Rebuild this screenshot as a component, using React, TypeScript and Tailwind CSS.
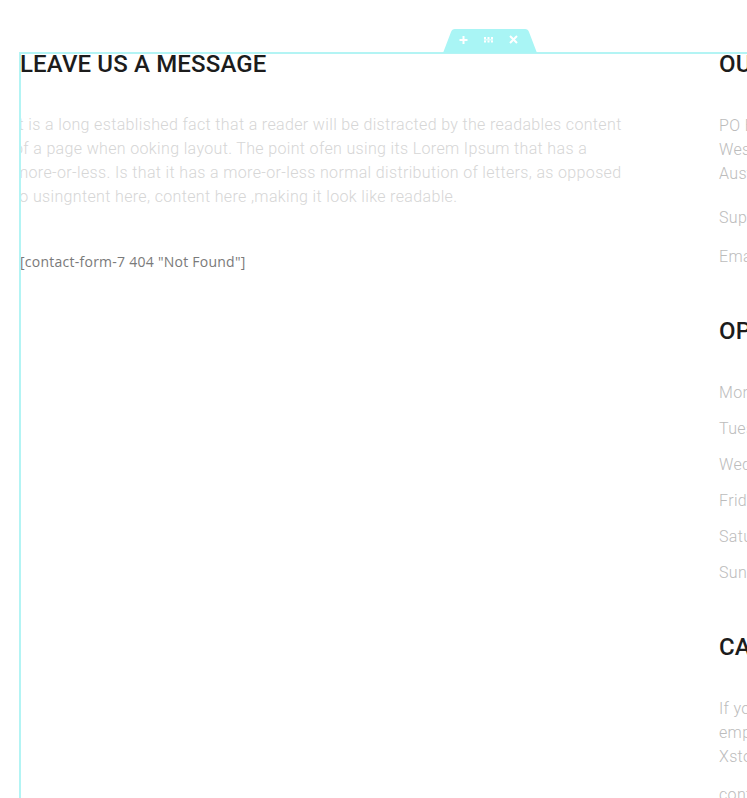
import React from "react";

const roboto = { fontFamily: "Roboto, 'Liberation Sans', sans-serif" };

function SectionHandle() {
  return (
    <div className="absolute left-[443px] top-[29px] h-[24px] w-[94px]">
      <svg width="94" height="24" viewBox="0 0 94 24" className="block">
        <path d="M0 24 L8 3 Q9 0 12 0 L82 0 Q85 0 86 3 L94 24 Z" fill="#a9f5f5" />
        {/* plus */}
        <rect x="19.5" y="7" width="2" height="8" fill="#ffffff" />
        <rect x="16.5" y="10" width="8" height="2" fill="#ffffff" />
        {/* grid handle */}
        <rect x="41" y="8" width="2" height="2" fill="#ffffff" />
        <rect x="44.5" y="8" width="2" height="2" fill="#ffffff" />
        <rect x="48" y="8" width="2" height="2" fill="#ffffff" />
        <rect x="41" y="11.5" width="2" height="2" fill="#ffffff" />
        <rect x="44.5" y="11.5" width="2" height="2" fill="#ffffff" />
        <rect x="48" y="11.5" width="2" height="2" fill="#ffffff" />
        <rect x="41" y="10" width="9" height="1.5" fill="#ffffff" opacity="0.6" />
        {/* close */}
        <path d="M67 7 L74 14 M74 7 L67 14" stroke="#ffffff" strokeWidth="2" />
      </svg>
    </div>
  );
}

function Heading({ children, className = "mb-[38px]" }: { children: React.ReactNode; className?: string }) {
  return (
    <h2
      className={`whitespace-nowrap text-[24px] font-medium uppercase leading-none tracking-[0.15px] text-[#1c1c1c] ${className}`}
      style={roboto}
    >
      {children}
    </h2>
  );
}

function Line({ children, className = "" }: { children: React.ReactNode; className?: string }) {
  return (
    <div
      className={`whitespace-nowrap text-[16px] font-light leading-[24px] tracking-[0.35px] text-[#bcbcbc] ${className}`}
      style={roboto}
    >
      {children}
    </div>
  );
}

export default function App() {
  return (
    <div className="relative h-[798px] w-[747px] overflow-hidden bg-white">
      <SectionHandle />
      <div className="pl-[19px] pt-[52px]">
        <section className="flex h-[760px] w-[1100px] border-l-2 border-t-2 border-[#b3f4f4]">
          <div className="w-[698px] shrink-0 overflow-hidden">
            <div className="-ml-px -mt-[2px]">
              <Heading className="mb-[37px]">Leave us a message</Heading>
            </div>
            <p
              className="-ml-[7px] w-[612px] text-[16px] font-light leading-[24px] tracking-[0.35px] text-[#d6d6d6]"
              style={roboto}
            >
              It is a long established fact that a reader will be distracted by the readables
              content of a page when ooking layout. The point ofen using its Lorem Ipsum that has a
              more-or-less. Is that it has a more-or-less normal distribution of letters, as opposed
              to usingntent here, content here ,making it look like readable.
            </p>
            <p
              className="-ml-px mt-[41px] text-[14px] leading-[24px] tracking-[0.25px] text-[#7a7a7a]"
              style={{ fontFamily: "'Open Sans', 'Liberation Sans', sans-serif" }}
            >
              [contact-form-7 404 "Not Found"]
            </p>
          </div>

          <aside className="w-[340px] shrink-0">
            <div className="-mt-[2px]">
              <Heading>Our address</Heading>
            </div>
            <Line>PO Box 16122 Collins Street</Line>
            <Line>West Victoria 8007</Line>
            <Line>Australia</Line>
            <Line className="mt-5">Support: (+1) 123 456 789</Line>
            <Line className="mt-[15px]">Email: support@example.com</Line>

            <div className="mt-[50px]">
              <Heading>Opening hours</Heading>
            </div>
            <div className="flex flex-col gap-3">
              <Line>Monday - Thursday: 9am - 6pm</Line>
              <Line>Tuesday: 9am - 6pm</Line>
              <Line>Wednesday: 9am - 6pm</Line>
              <Line>Friday: 9am - 6pm</Line>
              <Line>Saturday: 10am - 4pm</Line>
              <Line>Sunday: Closed</Line>
            </div>

            <div className="mt-[50px]">
              <Heading>Careers</Heading>
            </div>
            <Line>If you're interested in</Line>
            <Line>employment opportunities at</Line>
            <Line>Xstore, please email us:</Line>
            <Line className="mt-[14px]">contact@example.com</Line>
          </aside>
        </section>
      </div>
    </div>
  );
}
